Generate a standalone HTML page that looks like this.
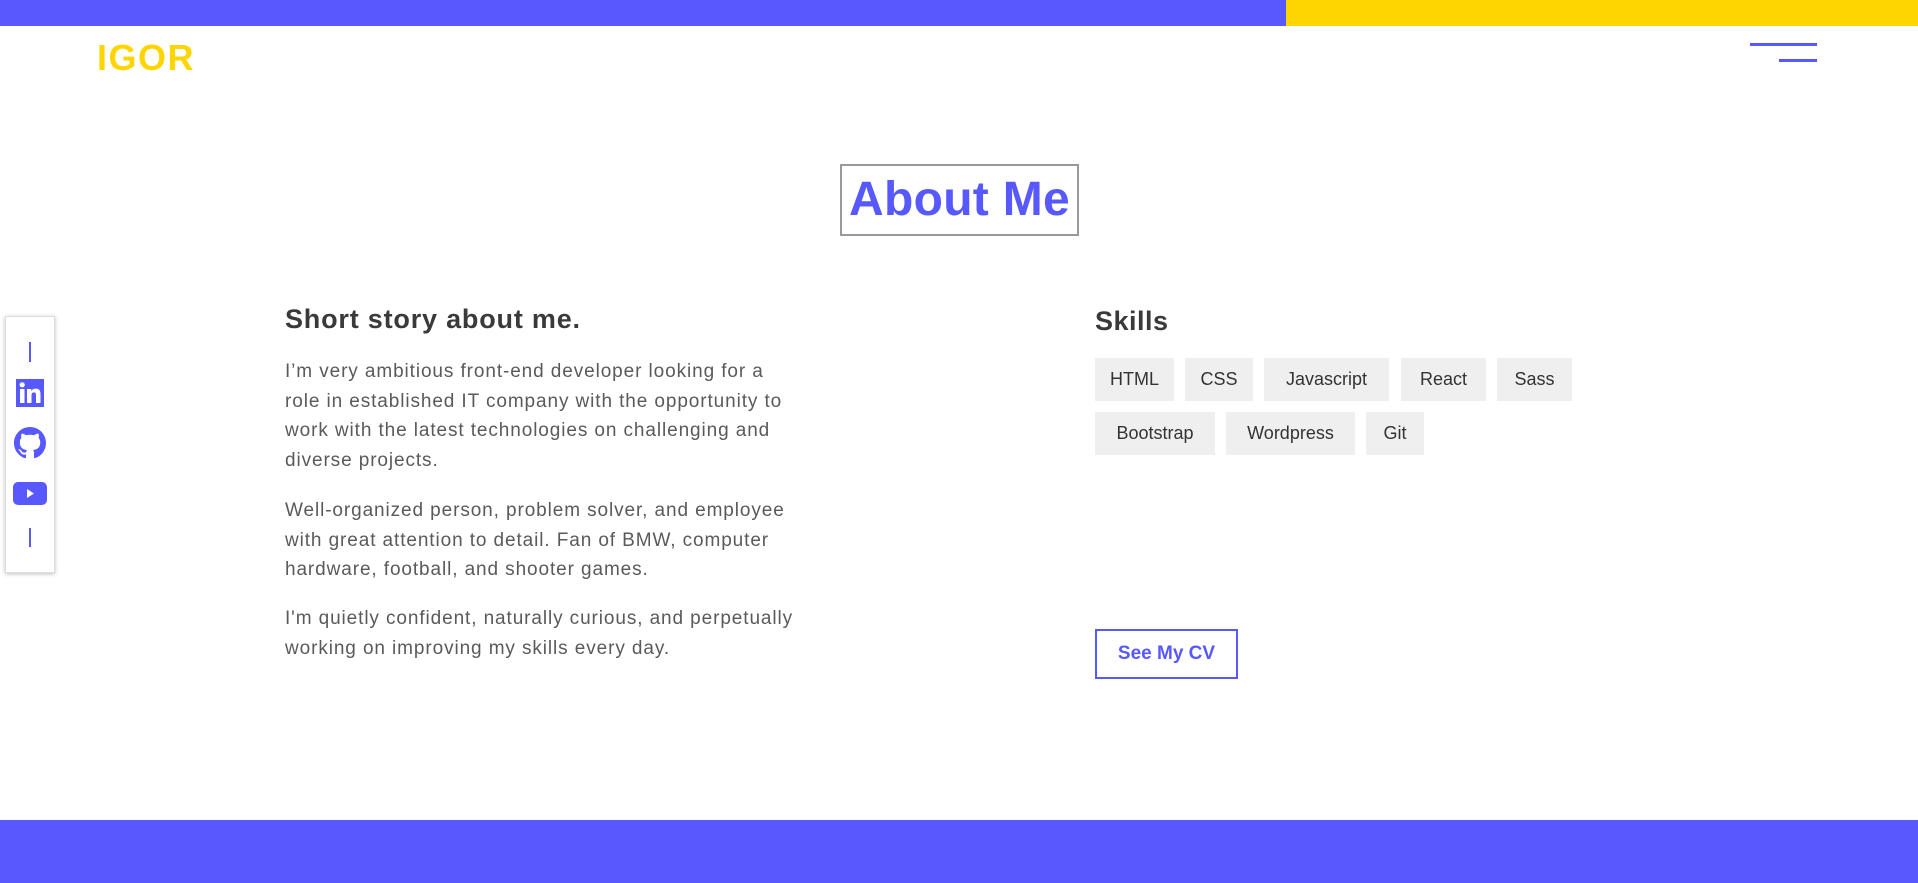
<!DOCTYPE html>
<html><head><meta charset="utf-8"><style>
*{margin:0;padding:0;box-sizing:border-box}
body{width:1918px;height:883px;position:relative;overflow:hidden;background:#fff;font-family:"Liberation Sans",sans-serif}
.a{position:absolute}
.tag{position:absolute;height:43px;background:#efefef;color:#333;font-size:18px;line-height:43px;text-align:center}
p{position:absolute;left:285px;white-space:nowrap;font-size:19px;line-height:29.5px;color:#5a5a5a;letter-spacing:0.9px}
</style></head><body>
<div class="a" style="left:0;top:0;width:1286px;height:26px;background:#5858ff"></div>
<div class="a" style="left:1286px;top:0;width:632px;height:26px;background:#ffd500"></div>
<div class="a" style="left:97px;top:37px;font-size:36px;font-weight:bold;color:#ffd500;letter-spacing:1.5px">IGOR</div>
<div class="a" style="left:1750px;top:43px;width:67px;height:3px;background:#5858ff"></div>
<div class="a" style="left:1779px;top:59px;width:38px;height:3px;background:#5858ff"></div>
<div class="a" style="left:840px;top:164px;width:239px;height:72px;border:2px solid #999;color:#5858ff;font-size:48px;font-weight:bold;text-align:center;line-height:68px;letter-spacing:0.3px">About Me</div>

<div class="a" style="left:5px;top:316px;width:50px;height:257px;border:1px solid #ddd;box-shadow:0 1px 4px rgba(0,0,0,.25);background:#fff"></div>
<div class="a" style="left:29px;top:342px;width:2px;height:20px;background:#5858ff"></div>
<svg class="a" style="left:16px;top:379px" width="28" height="28" viewBox="0 0 28 28"><rect width="28" height="28" fill="#5858ff"/><rect x="4" y="10" width="4.5" height="14" fill="#fff"/><circle cx="6.2" cy="5.8" r="2.6" fill="#fff"/><path d="M11 10h4.3v2c.8-1.4 2.4-2.4 4.6-2.4 3.5 0 4.6 2.2 4.6 5.6V24h-4.5v-7.8c0-1.6-.4-2.8-2-2.8s-2.5 1.2-2.5 2.8V24H11z" fill="#fff"/></svg>
<svg class="a" style="left:14px;top:427px" width="32" height="32" viewBox="0 0 16 16"><path fill="#5858ff" d="M8 0C3.58 0 0 3.58 0 8c0 3.540 2.290 6.530 5.470 7.590.4.07.55-.17.55-.38 0-.19-.01-.82-.01-1.49-2.01.37-2.530-.49-2.690-.94-.09-.23-.48-.94-.82-1.13-.28-.15-.68-.52-.01-.53.63-.01 1.080.58 1.230.82.72 1.210 1.870.87 2.330.66.07-.52.28-.87.51-1.07-1.780-.2-3.640-.89-3.640-3.950 0-.87.31-1.590.82-2.150-.08-.2-.36-1.020.08-2.120 0 0 .67-.21 2.2.82.64-.18 1.320-.27 2-.27.68 0 1.360.09 2 .27 1.530-1.040 2.2-.82 2.2-.82.44 1.1.16 1.920.08 2.120.51.56.82 1.270.82 2.150 0 3.070-1.870 3.750-3.650 3.950.29.25.54.73.54 1.480 0 1.070-.01 1.930-.01 2.2 0 .21.15.46.55.38A8.013 8.013 0 0016 8c0-4.420-3.580-8-8-8z"/></svg>
<svg class="a" style="left:13px;top:482px" width="34" height="23" viewBox="0 0 34 23"><rect width="34" height="23" rx="5" fill="#5858ff"/><path d="M14 7v9l7-4.5z" fill="#fff"/></svg>
<div class="a" style="left:29px;top:528px;width:2px;height:19px;background:#5858ff"></div>

<div class="a" style="left:285px;top:304px;font-size:27px;font-weight:bold;color:#3a3a3a;letter-spacing:0.8px">Short story about me.</div>
<p style="top:357px">I’m very ambitious front-end developer looking for a<br>role in established IT company with the opportunity to<br>work with the latest technologies on challenging and<br>diverse projects.</p>
<p style="top:496px">Well-organized person, problem solver, and employee<br>with great attention to detail. Fan of BMW, computer<br>hardware, football, and shooter games.</p>
<p style="top:604px">I'm quietly confident, naturally curious, and perpetually<br>working on improving my skills every day.</p>

<div class="a" style="left:1095px;top:306px;font-size:27px;font-weight:bold;color:#3a3a3a;letter-spacing:0.5px">Skills</div>
<div class="tag" style="left:1095px;top:358px;width:79px">HTML</div>
<div class="tag" style="left:1185px;top:358px;width:68px">CSS</div>
<div class="tag" style="left:1264px;top:358px;width:125px">Javascript</div>
<div class="tag" style="left:1401px;top:358px;width:85px">React</div>
<div class="tag" style="left:1497px;top:358px;width:75px">Sass</div>
<div class="tag" style="left:1095px;top:412px;width:120px">Bootstrap</div>
<div class="tag" style="left:1226px;top:412px;width:129px">Wordpress</div>
<div class="tag" style="left:1366px;top:412px;width:58px">Git</div>

<div class="a" style="left:1095px;top:629px;width:143px;height:50px;border:2px solid #5858ff;color:#5858ff;font-size:19px;font-weight:bold;text-align:center;line-height:46px">See My CV</div>

<div class="a" style="left:0;top:820px;width:1918px;height:63px;background:#5858ff"></div>
</body></html>
